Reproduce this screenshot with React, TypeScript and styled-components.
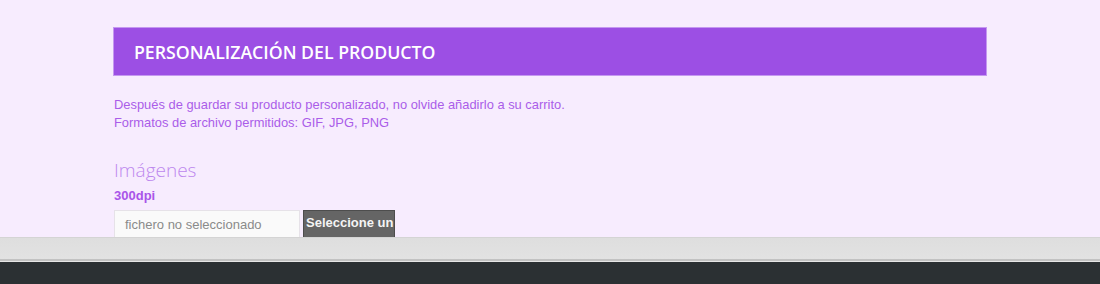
import React from 'react';
import styled, { createGlobalStyle } from 'styled-components';

const GlobalStyle = createGlobalStyle`
  html, body {
    margin: 0;
    padding: 0;
    background: #f7ecfe;
  }
  body {
    font-family: "Liberation Sans", Arial, sans-serif;
    overflow: hidden;
  }
`;

const Page = styled.div`
  width: 1100px;
  height: 284px;
  display: flex;
  flex-direction: column;
  overflow: hidden;
`;

const Content = styled.div`
  height: 237px;
  flex: none;
  overflow: hidden;
  padding: 27px 0 0 113px;
  box-sizing: border-box;
`;

const Panel = styled.div`
  width: 874px;
`;

const Heading = styled.div`
  height: 49px;
  box-sizing: border-box;
  background: #9c4fe4;
  border: 1px solid #c598f0;
  padding: 0 20px;
  display: flex;
  align-items: center;
  h2 {
    margin: 0;
    font-family: "Open Sans", sans-serif;
    font-weight: 600;
    font-size: 17.7px;
    color: #ffffff;
  }
`;

const Notice = styled.p`
  margin: 20px 0 0 1px;
  font-size: 12.9px;
  line-height: 18px;
  color: #aa5de9;
`;

const FieldTitle = styled.h3`
  margin: 25px 0 0 1px;
  font-family: "Open Sans", sans-serif;
  font-weight: 300;
  font-size: 19px;
  line-height: 26px;
  color: #bd88ee;
`;

const Resolution = styled.div`
  margin: 5px 0 0 1px;
  font-size: 13px;
  font-weight: 700;
  line-height: 16px;
  color: #a955e9;
`;

const FileRow = styled.div`
  display: flex;
  align-items: stretch;
  gap: 3px;
  margin: 6px 0 0 1px;
  height: 30px;
`;

const FileName = styled.div`
  width: 186px;
  box-sizing: border-box;
  background: #fafafa;
  border: 1px solid #e6e2e8;
  padding: 6px 10px 0;
  font-size: 13px;
  color: #8a8a8a;
`;

const PickButton = styled.button`
  width: 92px;
  box-sizing: border-box;
  background: #656565;
  border: 1px solid #4d4d4d;
  padding: 0 0 6px 2px;
  font-family: "Liberation Sans", Arial, sans-serif;
  font-size: 13px;
  font-weight: 700;
  color: #f4f4f4;
  text-align: left;
  white-space: nowrap;
  overflow: hidden;
`;

const StatusBar = styled.div`
  height: 21px;
  flex: none;
  background: linear-gradient(#dedede, #e2e2e2);
  border-top: 1px solid #d4d4d4;
  border-bottom: 2px solid #c2c2c2;
  box-shadow: 0 1px 0 #e6e6e6;
`;

const Dock = styled.div`
  flex: 1;
  margin-top: 1px;
  background: #2b3033;
`;

export default function App() {
  return (
    <>
      <GlobalStyle />
      <Page>
        <Content>
          <Panel>
            <Heading>
              <h2>PERSONALIZACIÓN DEL PRODUCTO</h2>
            </Heading>
            <Notice>
              Después de guardar su producto personalizado, no olvide añadirlo a su carrito.
              <br />
              Formatos de archivo permitidos: GIF, JPG, PNG
            </Notice>
            <FieldTitle>Imágenes</FieldTitle>
            <Resolution>300dpi</Resolution>
            <FileRow>
              <FileName>fichero no seleccionado</FileName>
              <PickButton>Seleccione un</PickButton>
            </FileRow>
          </Panel>
        </Content>
        <StatusBar />
        <Dock />
      </Page>
    </>
  );
}
